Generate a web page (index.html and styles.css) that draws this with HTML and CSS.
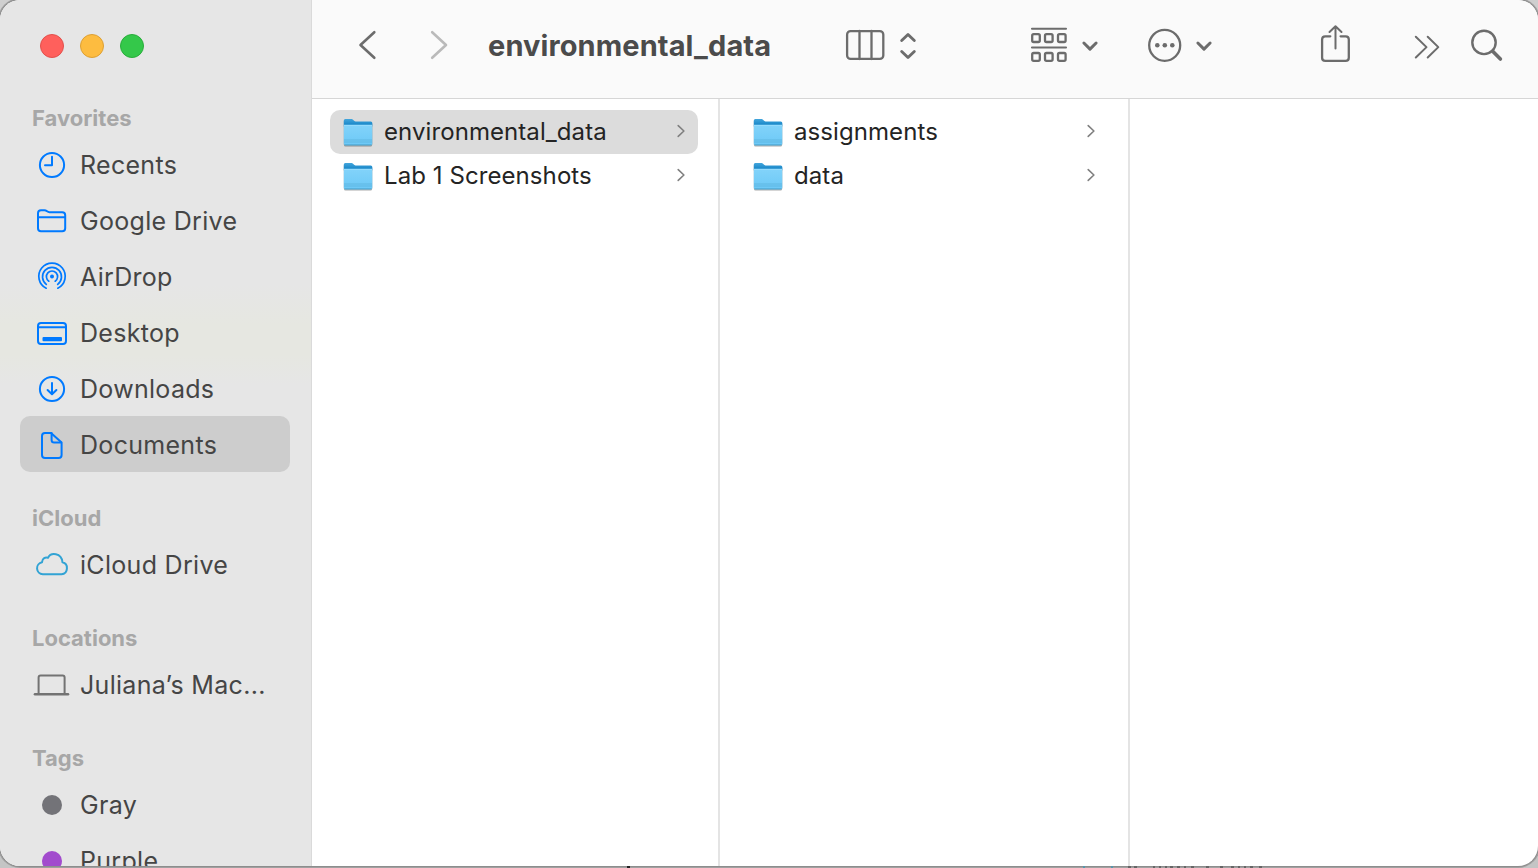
FILE: index.html
```html
<!DOCTYPE html>
<html lang="en">
<head>
<meta charset="utf-8">
<title>environmental_data</title>
<link rel="stylesheet" href="styles.css">
</head>
<body>
<svg class="defs" width="0" height="0" aria-hidden="true">
  <defs>
    <linearGradient id="front" x1="0" y1="0" x2="0" y2="1"><stop offset="0" stop-color="#82d3fa"/><stop offset="1" stop-color="#6cc8f6"/></linearGradient>
    <linearGradient id="back" x1="0" y1="0" x2="0" y2="1"><stop offset="0" stop-color="#44a6dc"/><stop offset="1" stop-color="#0f80c4"/></linearGradient>
    <symbol id="folder" viewBox="0 0 32 32">
      <path d="M1.800 3.400q0-1.500 1.500-1.500h6.500c1.500 0 2 2.500 3.700 2.500h15.300q1.500 0 1.500 1.500V9H1.800z" fill="url(#back)"/>
      <path d="M1.800 8h28.500v18.600q0 1.600-1.600 1.600H3.400q-1.600 0-1.600-1.600z" fill="url(#front)"/>
      <path d="M2 8.200h28" stroke="#a4e2ff" stroke-width=".8"/>
      <path d="M2 23h28M2 25h28" stroke="#57afd9" stroke-width=".7"/>
      <path d="M2.400 27.900h27.200" stroke="#4ba3cc" stroke-width="1"/>
    </symbol>
    <symbol id="chevron" viewBox="0 0 12 16"><path d="M3.200 2.600 8.900 8l-5.700 5.400" fill="none" stroke="#808080" stroke-width="1.600" stroke-linecap="round" stroke-linejoin="round"/></symbol>
  </defs>
</svg>
<div class="window">
  <aside class="sidebar">
    <div class="lights"><i class="light red"></i><i class="light yellow"></i><i class="light green"></i></div>
    <h2 class="heading">Favorites</h2>
    <div class="item"><svg class="icon" viewBox="0 0 40 40"><circle cx="20" cy="21" r="12.100"/><path d="M20 12.800V21.300H13"/></svg><span>Recents</span></div>
    <div class="item"><svg class="icon" viewBox="0 0 40 40"><path d="M6 28.300V13.200q0-3 3-3h3.400c2.500 0 2.800 2 5 2h12.800q3 0 3 3v13q0 3-3 3H9q-3 0-3-3zM6 17.200h27.200"/></svg><span>Google Drive</span></div>
    <div class="item"><svg class="icon thin" viewBox="0 0 40 40"><circle cx="20" cy="20.500" r="2" fill="#007aff" stroke="none"/><path d="M16.800 25.200a5.600 5.600 0 1 1 6.400 0M14.300 28.400a9.500 9.500 0 1 1 11.400 0M14.200 32.200a13.200 13.200 0 1 1 11.600 0"/></svg><span>AirDrop</span></div>
    <div class="item"><svg class="icon" viewBox="0 0 40 40"><rect x="6" y="11" width="28" height="21" rx="3"/><path d="M6 15.300h28"/><rect x="10.500" y="25" width="19.500" height="4.200" rx="1" fill="#007aff" stroke="none"/></svg><span>Desktop</span></div>
    <div class="item"><svg class="icon" viewBox="0 0 40 40"><circle cx="20" cy="21" r="12.100"/><path d="M20 15v11M15.600 22l4.400 4.300 4.400-4.300"/></svg><span>Downloads</span></div>
    <div class="item selected"><svg class="icon" viewBox="0 0 40 40"><path d="M20 9h-6q-3 0-3 3v19q0 3 3 3h13.600q3 0 3-3V18.600z" transform="translate(-1 0)"/><path d="M19.600 9v7q0 2.500 2.500 2.500h7"/></svg><span>Documents</span></div>
    <h2 class="heading next">iCloud</h2>
    <div class="item"><svg class="icon cloud" viewBox="0 0 40 40"><path d="M10.800 30.200a6 6 0 0 1-.8-11.900c.2-4.200 3.600-5.500 6-4.500 2.700-5.800 13.500-5.300 14.500 4.500 6.300 1.300 5.800 11.500-1 11.900z"/></svg><span>iCloud Drive</span></div>
    <h2 class="heading next">Locations</h2>
    <div class="item"><svg class="icon laptop" viewBox="0 0 40 40"><path d="M6.600 29V13.500q0-2 2-2h22q2 0 2 2V29"/><path d="M3 30.200h33" stroke-width="2.600"/></svg><span>Juliana’s Mac...</span></div>
    <h2 class="heading next">Tags</h2>
    <div class="item"><i class="tag gray"></i><span>Gray</span></div>
    <div class="item"><i class="tag purple"></i><span>Purple</span></div>
  </aside>
  <main class="main">
    <header class="toolbar">
      <svg class="tool back" width="20" height="36" viewBox="357 27 20 36"><path d="M374.300 32.200 360.500 45l13.800 12.800"/></svg>
      <svg class="tool forward" width="20" height="36" viewBox="429 27 20 36"><path d="M432.200 32.200 446 45l-13.800 12.800"/></svg>
      <h1 class="title">environmental_data</h1>
      <svg class="tool columns-view" width="76" height="40" viewBox="844 25 76 40"><rect x="847.100" y="31.100" width="36.200" height="27.800" rx="3.500"/><path d="M859.500 31v28M871.500 31v28"/><path d="m901.700 40.500 6.300-6 6.300 6M901.700 51.500l6.300 6 6.300-6" stroke-width="2.900"/></svg>
      <svg class="tool group-view" width="72" height="40" viewBox="1029 25 72 40"><path d="M1032 28.700h34M1032 47.500h34" stroke-width="2.100"/><rect x="1032.200" y="34.200" width="7.600" height="7.800" rx="1.500"/><rect x="1045" y="34.200" width="7.600" height="7.800" rx="1.500"/><rect x="1058" y="34.200" width="7.600" height="7.800" rx="1.500"/><rect x="1032.200" y="53" width="7.600" height="7.800" rx="1.500"/><rect x="1045" y="53" width="7.600" height="7.800" rx="1.500"/><rect x="1058" y="53" width="7.600" height="7.800" rx="1.500"/><path d="m1083.900 43 6.100 6.100 6.100-6.100" stroke-width="3"/></svg>
      <svg class="tool actions" width="70" height="40" viewBox="1145 25 70 40"><circle cx="1164.700" cy="45.300" r="15.500"/><g fill="#6c6c6c" stroke="none"><circle cx="1157.300" cy="45.200" r="2.300"/><circle cx="1164.800" cy="45.200" r="2.300"/><circle cx="1172.300" cy="45.200" r="2.300"/></g><path d="m1197.900 43 6.100 6.100 6.100-6.100" stroke-width="3"/></svg>
      <svg class="tool share" width="34" height="42" viewBox="1319 23 34 42"><path d="M1330.300 36.300h-5q-3.200 0-3.200 3.200v18.200q0 3.200 3.200 3.200h20.300q3.200 0 3.200-3.200V39.500q0-3.200-3.200-3.200h-5"/><path d="M1335.500 48.500V27M1329.500 32l6-5.800 6 5.800" stroke-width="2"/></svg>
      <svg class="tool more" width="28" height="28" viewBox="1413 33 28 28"><path d="m1415.800 36.700 10.700 10.400-10.700 10.400M1427.700 36.700l10.600 10.400-10.600 10.400" stroke-width="2"/></svg>
      <svg class="tool search" width="36" height="38" viewBox="1468 27 36 38"><circle cx="1484" cy="42.400" r="11.700" stroke-width="2.400"/><path d="m1492.700 51.200 7.700 7.800" stroke-width="3.600"/></svg>
    </header>
    <div class="columns">
      <section class="column">
        <div class="row active"><svg class="folder"><use href="#folder"/></svg><span>environmental_data</span><svg class="chevron"><use href="#chevron"/></svg></div>
        <div class="row"><svg class="folder"><use href="#folder"/></svg><span>Lab 1 Screenshots</span><svg class="chevron"><use href="#chevron"/></svg></div>
      </section>
      <section class="column">
        <div class="row"><svg class="folder"><use href="#folder"/></svg><span>assignments</span><svg class="chevron"><use href="#chevron"/></svg></div>
        <div class="row"><svg class="folder"><use href="#folder"/></svg><span>data</span><svg class="chevron"><use href="#chevron"/></svg></div>
      </section>
      <section class="column last"></section>
    </div>
  </main>
</div>
<!-- Slivers of the window behind, visible below the bottom edge -->
<svg class="behind" width="1538" height="2" viewBox="0 0 1538 2"><path d="M627 1h3" stroke="#222" stroke-width="2"/><path d="M1083 1h2M1111 1h2" stroke="#5796ad" stroke-width="2"/><path d="M1128 1h3m3 0h3m16 0h2m4 0h2m4 0h2m3 0h3m4 0h3m4 0h2m5 0h3m12 0h3m11 0h3m8 0h3m4 0h2m4 0h2m4 0h3m6 0h3" stroke="#666" stroke-width="2"/></svg>
</body>
</html>
```
FILE: styles.css
```css
* { box-sizing: border-box; }
body { margin: 0; width: 1538px; height: 868px; overflow: hidden; background: linear-gradient(#cfcfcf 0 850px, #c4c5c5 850px); font-family: Inter, "Liberation Sans", sans-serif; }
.defs { display: block; height: 0; }
.window { display: flex; width: 1538px; height: 866px; border-radius: 20px; overflow: hidden; background: #fff; box-shadow: 0 0 0 1px #8d8d8d, 0 0 0 2px #a0a0a0; }
.behind { position: absolute; left: 0; top: 866px; }
.sidebar { width: 312px; flex: none; overflow: hidden; border-right: 1px solid #dadada; padding: 0 21px 0 20px; background: linear-gradient(#e6e6e6 285px, #e6e7e1 325px 355px, #e6e6e6 385px); }
.lights { display: flex; gap: 16px; height: 100px; padding: 34px 0 0 20px; }
.light { width: 24px; height: 24px; border-radius: 50%; border: 1px solid; }
.red { background: #ff605c; border-color: #e2504c; }
.yellow { background: #fdbc40; border-color: #dda034; }
.green { background: #34c84a; border-color: #29ad3b; }
.heading { margin: 0; height: 36px; padding-left: 12px; font-size: 22px; font-weight: 700; line-height: 36px; color: #a7a7a7; }
.heading.next { margin-top: 28px; }
.item { display: flex; align-items: center; height: 56px; padding-left: 12px; border-radius: 10px; font-size: 25px; letter-spacing: .3px; color: #454545; white-space: nowrap; }
.item span { padding-top: 2px; }
.selected { background: #cdcdcd; }
.icon { flex: none; width: 40px; height: 40px; margin-right: 8px; fill: none; stroke: #007aff; stroke-width: 2; stroke-linecap: round; stroke-linejoin: round; }
.thin { stroke-width: 1.7; }
.cloud { stroke: #32a3d4; }
.laptop { stroke: #737373; }
.tag { flex: none; width: 20px; height: 20px; margin: 2px 18px 0 10px; border-radius: 50%; }
.gray { background: #737378; }
.purple { background: #a24bcd; }
.main { display: flex; flex-direction: column; flex: 1; min-width: 0; }
.toolbar { display: flex; align-items: flex-start; height: 99px; border-bottom: 1px solid #d6d6d6; background: #fafafa; }
.tool { flex: none; fill: none; stroke: #6c6c6c; stroke-width: 2.3; stroke-linecap: round; stroke-linejoin: round; }
.back { margin: 27px 0 0 45px; stroke-width: 2.6; }
.forward { margin: 27px 0 0 52px; stroke: #bababa; stroke-width: 2.6; }
.title { width: 356px; margin: 0 0 0 39px; font-size: 29px; font-weight: 700; letter-spacing: .1px; line-height: 91px; color: #4b4b4b; }
.columns-view { margin: 25px 0 0; }
.group-view { margin: 25px 0 0 109px; }
.actions { margin: 25px 0 0 44px; }
.share { margin: 23px 0 0 104px; }
.more { margin: 33px 0 0 60px; }
.search { margin: 27px 0 0 27px; }
.columns { display: flex; flex: 1; }
.column { flex: none; width: 408px; padding: 11px 20px 0 18px; border-right: 2px solid #e4e4e4; }
.column + .column { width: 410px; padding-left: 20px; }
.column.last { border: 0; }
.row { display: flex; align-items: center; height: 44px; padding: 0 11px 0 12px; border-radius: 10px; font-size: 24px; letter-spacing: .08px; color: #242424; white-space: nowrap; }
.row span { padding-bottom: 1px; }
.active { background: #dcdcdc; }
.folder { width: 32px; height: 32px; margin: 2px 10px 0 0; filter: drop-shadow(0 1px .5px rgba(0,0,0,.3)); }
.chevron { width: 12px; height: 16px; margin: 0 0 2px auto; }
```
